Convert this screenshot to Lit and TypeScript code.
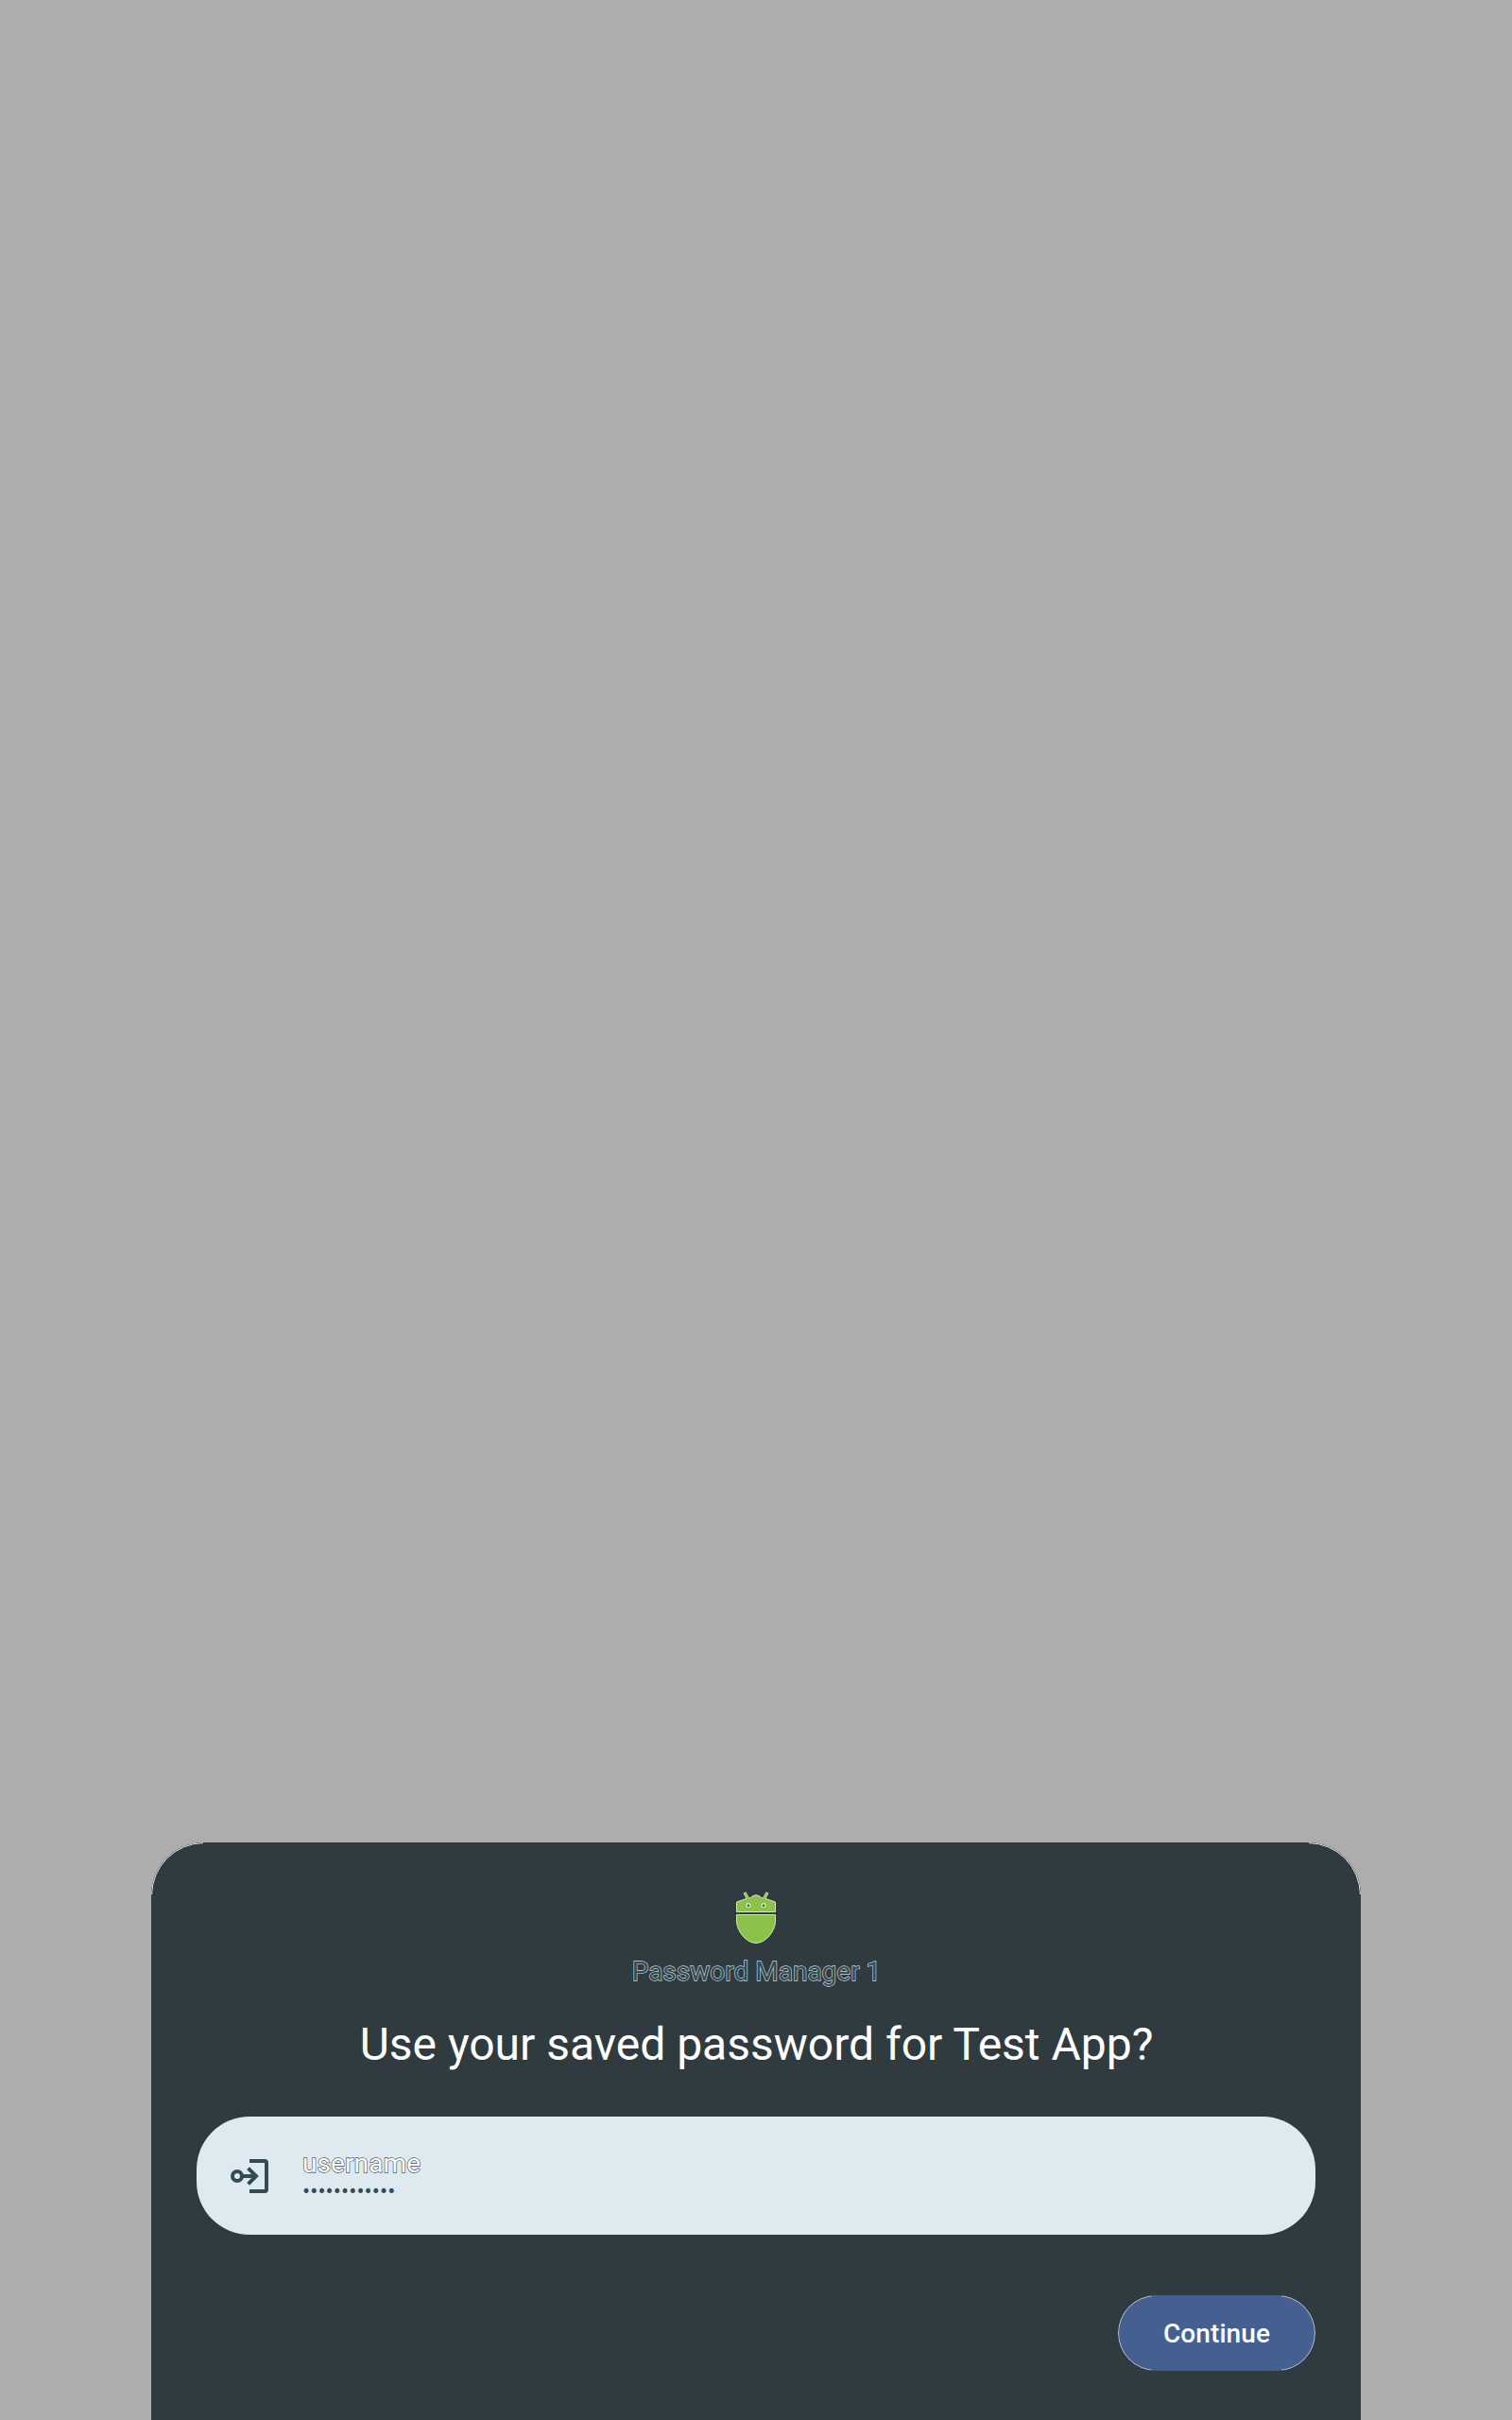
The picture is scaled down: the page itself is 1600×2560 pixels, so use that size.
import { LitElement, html, css } from "lit";
import { customElement, property } from "lit/decorators.js";

@customElement("provider-header")
class ProviderHeader extends LitElement {
  @property() name = "";
  static styles = css`
    :host { display: flex; flex-direction: column; align-items: center; }
    .logo { display: block; width: 64px; height: 64px; }
    .name {
      margin-top: 5px; padding-left: 1px; height: 41px; font-size: 28px; line-height: 40px;
      color: #334b55; -webkit-text-stroke: 1.3px #c4d6de; paint-order: stroke fill;
    }
  `;
  render() {
    return html`
      <svg class="logo" viewBox="768 1997 64 64">
        <path d="M788 2002L792 2009.5M812 2002L808 2009.5" stroke="#d9ecc0" stroke-width="3.2" fill="none"/>
        <path d="M779.5 2012L790 2008.5Q794 2008.5 797 2005.5Q800 2004 803 2005.5Q806 2008.5 810 2008.5L820.5 2012V2022.5H779.5Z" fill="#8bc34a" stroke="#d3e9b8" stroke-width="1"/>
        <path d="M779.5 2025.5H820.5V2032C820.5 2043 810 2055.5 800 2055.5S779.5 2043 779.5 2032Z" fill="#8bc34a" stroke="#d3e9b8" stroke-width="1"/>
        <path d="M788.5 2002.5L792.5 2010.5M811.5 2002.5L807.5 2010.5" stroke="#8bc34a" stroke-width="2" fill="none"/>
        <circle cx="792" cy="2015.7" r="1.8" fill="#303b40" stroke="#e8f3dc" stroke-width="1.2"/>
        <circle cx="808" cy="2015.7" r="1.8" fill="#303b40" stroke="#e8f3dc" stroke-width="1.2"/>
      </svg>
      <div class="name">${this.name}</div>`;
  }
}

@customElement("credential-entry")
class CredentialEntry extends LitElement {
  @property() user = "";
  @property({ type: Number }) length = 12;
  static styles = css`
    :host {
      display: flex; align-items: center; box-sizing: border-box; height: 125px;
      padding-left: 32px; border-radius: 56px; background: #deeaf0;
    }
    .icon { width: 48px; height: 48px; flex: none; }
    .text { margin-left: 32px; display: flex; flex-direction: column; }
    .user {
      font-size: 28px; line-height: 32px; color: #fff; letter-spacing: 0.1px;
      -webkit-text-stroke: 1.4px #4a5a61; paint-order: stroke fill;
    }
    .secret {
      height: 26px; font-size: 24px; line-height: 26px; letter-spacing: 0.1px; color: #334b53;
    }
  `;
  render() {
    return html`
      <svg class="icon" viewBox="240 2278 48 48" fill="none" stroke="#334b53" stroke-width="4">
        <circle cx="251" cy="2302" r="5"/>
        <path d="M257 2302H271M262.6 2293.6L271 2302L262.6 2310.4"/>
        <path d="M264 2286H280Q282 2286 282 2288V2316Q282 2318 280 2318H264"/>
      </svg>
      <div class="text">
        <div class="user">${this.user}</div>
        <div class="secret">${"•".repeat(this.length)}</div>
      </div>`;
  }
}

@customElement("app-root")
class AppRoot extends LitElement {
  static styles = css`
    :host {
      display: flex; align-items: flex-end; justify-content: center; box-sizing: border-box;
      width: 1600px; height: 2560px; background: #adadad;
      font-family: Roboto, sans-serif; overflow: hidden;
    }
    .sheet {
      position: relative;
      width: 1280px; height: 611px; box-sizing: border-box; padding: 48px 48px 0;
      display: flex; flex-direction: column;
      border-radius: 56px 56px 0 0; background: #303b40;
    }
    .sheet::after, .continue::after {
      content: ""; position: absolute; inset: 0; box-sizing: border-box;
      border: 1px solid #e6ecee; border-radius: inherit; pointer-events: none;
    }
    .sheet::after {
      mask: linear-gradient(#000 0 0) 0 0 / 55px 55px no-repeat,
        linear-gradient(#000 0 0) 100% 0 / 55px 55px no-repeat;
    }
    .continue::after {
      opacity: 0.75;
      mask: linear-gradient(#000 0 0) 0 0 / 36px 100% no-repeat,
        linear-gradient(#000 0 0) 100% 0 / 36px 100% no-repeat;
    }
    .title {
      margin: 24px 0 0; padding-left: 1px; height: 64px; text-align: center; white-space: nowrap;
      font-size: 48px; line-height: 64px; font-weight: 400; color: #fff;
    }
    .entry { margin-top: 44px; }
    .actions { display: flex; justify-content: flex-end; margin-top: 64px; }
    .continue {
      position: relative;
      width: 209px; height: 80px; padding: 2px 0 0; border: 0; border-radius: 40px;
      background: #465f91; color: #fff;
      font: 500 28px/40px Roboto, sans-serif; letter-spacing: 0.1px;
    }
  `;
  render() {
    return html`
      <main class="sheet">
        <provider-header name="Password Manager 1"></provider-header>
        <h1 class="title">Use your saved password for Test App?</h1>
        <credential-entry class="entry" user="username" length="12"></credential-entry>
        <div class="actions"><button class="continue">Continue</button></div>
      </main>`;
  }
}
